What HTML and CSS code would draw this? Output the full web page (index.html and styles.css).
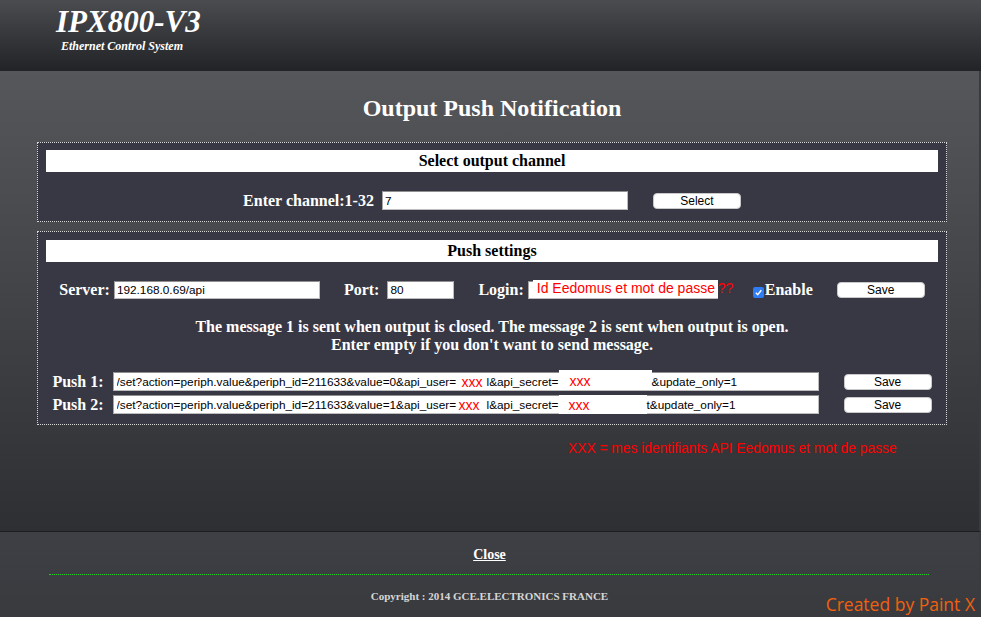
FILE: index.html
```html
<!DOCTYPE html>
<html lang="en">
<head>
    <meta charset="UTF-8">
    <title>IPX800-V3 - Output Push Notification</title>
    <link rel="stylesheet" href="styles.css">
</head>
<body>
    <div class="top">
        <h1 class="logo">IPX800-V3</h1>
        <p class="tagline">Ethernet Control System</p>
    </div>

    <div class="main">
        <div class="content">
            <h2 class="page-title">Output Push Notification</h2>

            <!-- choix de la sortie -->
            <div class="panel">
                <div class="panel-head">Select output channel</div>
                <div class="row row-channel">
                    <span class="label">Enter channel:1-32</span>
                    <input class="field f-channel" type="text" value="7">
                    <button class="btn">Select</button>
                </div>
            </div>

            <!-- reglages push -->
            <div class="panel panel-push">
                <div class="panel-head">Push settings</div>
                <div class="row row-server">
                    <span class="label">Server:</span>
                    <input class="field f-server" type="text" value="192.168.0.69/api">
                    <span class="label l-port">Port:</span>
                    <input class="field f-port" type="text" value="80">
                    <span class="label l-login">Login:</span>
                    <span class="login">
                        <input class="field f-login" type="text" value="">
                        <span class="note-login">Id Eedomus et mot de passe <em>??</em></span>
                    </span>
                    <span class="check"><svg width="9" height="9" viewBox="0 0 9 9"><path d="M1.8 4.8 L3.7 6.7 L7.3 2.2" fill="none" stroke="#fff" stroke-width="1.4"/></svg></span>
                    <span class="label l-enable">Enable</span>
                    <button class="btn b-save">Save</button>
                </div>

                <p class="info">The message 1 is sent when output is closed. The message 2 is sent when output is open.<br>Enter empty if you don't want to send message.</p>

                <div class="row row-push">
                    <span class="label">Push 1:</span>
                    <div class="field f-push">
                        <span class="s-url">/set?action=periph.value&amp;periph_id=211633&amp;value=0&amp;api_user=</span>
                        <span class="xxx">xxx</span>
                        <span class="s-secret">l&amp;api_secret=</span>
                        <span class="mask mask-1">xxx</span>
                        <span class="s-end">&amp;update_only=1</span>
                    </div>
                    <button class="btn b-push">Save</button>
                </div>
                <div class="row row-push">
                    <span class="label">Push 2:</span>
                    <div class="field f-push">
                        <span class="s-url s-url-2">/set?action=periph.value&amp;periph_id=211633&amp;value=1&amp;api_user=</span>
                        <span class="xxx xxx-2">xxx</span>
                        <span class="s-secret">l&amp;api_secret=</span>
                        <span class="mask mask-2">xxx</span>
                        <span class="s-end">t&amp;update_only=1</span>
                    </div>
                    <button class="btn b-push">Save</button>
                </div>
            </div>
        </div>

        <div class="note">XXX = mes identifiants API Eedomus et mot de passe</div>
    </div>

    <div class="bottom">
        <a class="close" href="#">Close</a>
        <div class="rule"></div>
        <p class="copy">Copyright : 2014 GCE.ELECTRONICS FRANCE</p>
        <span class="paint">Created by Paint X</span>
    </div>
</body>
</html>
```

FILE: styles.css
```css
* {
    box-sizing: border-box;
}

body {
    margin: 0;
    width: 981px;
    height: 617px;
    overflow: hidden;
    font-family: "Liberation Serif", "Times New Roman", serif;
    color: #fff;
    background: #38393d;
}

/* en-tete */
.top {
    height: 71px;
    padding: 4px 0 0 56px;
    background: linear-gradient(#4b4c50, #222326);
}

.logo {
    margin: 0;
    font-size: 31px;
    line-height: 36px;
    font-style: italic;
    font-weight: bold;
}

.tagline {
    margin: 0 0 0 5px;
    font-size: 12px;
    line-height: 13px;
    font-style: italic;
    font-weight: bold;
}

/* zone principale */
.main {
    position: relative;
    height: 460px;
    padding-top: 23px;
    border-right: 2px solid #3a3b3e;
    background: linear-gradient(#56575b, #2e2f32);
}

.content {
    width: 910px;
    margin-left: 37px;
}

.page-title {
    margin: 0 0 20px;
    text-align: center;
    font-size: 24px;
    line-height: 28px;
}

.panel {
    padding: 7px 8px 11px;
    border: 1px dotted #d8d8d8;
    background: #383844;
}

.panel-push {
    margin-top: 9px;
    padding: 8px 8px 10px;
}

.panel-head {
    height: 22px;
    background: #fff;
    color: #000;
    text-align: center;
    font-size: 16px;
    font-weight: bold;
    line-height: 22px;
}

.row {
    display: flex;
    justify-content: center;
    align-items: center;
}

.label {
    font-size: 16px;
    font-weight: bold;
    white-space: nowrap;
}

.field {
    height: 19px;
    padding: 0 2px;
    border: 1px solid #bdbdbd;
    border-top-color: #8f8f8f;
    border-left-color: #a5a5a5;
    background: #fff;
    color: #000;
    font-family: "Liberation Sans", Arial, sans-serif;
    font-size: 11.8px;
    outline: none;
}

.btn {
    width: 88px;
    height: 16px;
    padding: 0;
    border: 1px solid #c9c9c9;
    border-radius: 4px;
    background: #fff;
    color: #000;
    font-family: "Liberation Sans", Arial, sans-serif;
    font-size: 12px;
    line-height: 14px;
}

/* canal */
.row-channel {
    margin-top: 19px;
}

.f-channel {
    width: 246px;
    margin: 0 25px 0 8px;
}

/* serveur */
.row-server {
    margin-top: 19px;
}

.f-server {
    width: 206px;
    height: 18px;
    margin-left: 4px;
}

.l-port {
    margin: 0 8px 0 24px;
}

.f-port {
    width: 67px;
    height: 18px;
}

.l-login {
    margin-left: 24px;
}

.login {
    position: relative;
    display: block;
    margin-left: 4px;
}

.f-login {
    display: block;
    width: 190px;
    height: 18px;
}

.note-login {
    position: absolute;
    top: -1px;
    left: 5px;
    width: 185px;
    height: 18px;
    padding-left: 4px;
    background: #fff;
    color: #f00;
    font-family: "Liberation Sans", Arial, sans-serif;
    font-size: 14px;
    line-height: 16px;
    white-space: nowrap;
}

.note-login em {
    position: absolute;
    left: 185px;
    font-style: normal;
}

.check {
    display: flex;
    align-items: center;
    justify-content: center;
    width: 11px;
    height: 11px;
    margin: 4px 1px 0 35px;
    border-radius: 2px;
    background: #2f7df4;
}

.b-save {
    margin-left: 24px;
}

.info {
    margin: 19px 0 0;
    text-align: center;
    font-size: 16px;
    font-weight: bold;
    line-height: 18px;
}

/* lignes push */
.row-push {
    margin-top: 18px;
}

.row-push + .row-push {
    margin-top: 4px;
}

.f-push {
    display: flex;
    align-items: center;
    width: 706px;
    margin: 0 25px 0 9px;
    padding-left: 3px;
    white-space: nowrap;
}

.f-push span {
    flex: none;
}

.s-url {
    width: 343px;
    overflow: hidden;
}

.s-url-2 {
    width: 340px;
}

.xxx {
    width: 27px;
    padding-left: 2px;
    color: #f00;
    font-size: 14px;
}

.xxx-2 {
    width: 30px;
}

.s-secret {
    width: 72px;
}

.mask {
    align-self: stretch;
    background: #fff;
    color: #f00;
    font-size: 14px;
    line-height: 19px;
}

.mask-1 {
    width: 93px;
    margin: -3px 0 0;
    padding: 2px 0 0 11px;
}

.mask-2 {
    width: 88px;
    margin: -1px 0;
    padding: 1px 0 0 10px;
}

.note {
    position: absolute;
    top: 370px;
    left: 568px;
    color: #f00;
    font-family: "Liberation Sans", Arial, sans-serif;
    font-size: 13.8px;
    line-height: 15px;
}

/* pied de page */
.bottom {
    position: relative;
    height: 86px;
    padding-top: 13px;
    border-top: 1px solid #1d1d1f;
    border-right: 2px solid #3a3b3e;
    background: linear-gradient(#3f4045, #393a3e);
    text-align: center;
}

.close {
    display: inline-block;
    color: #fff;
    font-size: 14px;
    font-weight: bold;
    line-height: 16px;
}

.rule {
    width: 880px;
    margin: 11px 0 0 49px;
    border-top: 1px dotted #1bd01b;
}

.copy {
    margin: 15px 0 0;
    color: #d6d6d6;
    font-size: 11px;
    font-weight: bold;
    line-height: 12px;
}

.paint {
    position: absolute;
    right: 4px;
    bottom: 2px;
    color: #f2600e;
    font-family: "Open Sans", sans-serif;
    font-size: 17.5px;
    line-height: 22px;
}
```
